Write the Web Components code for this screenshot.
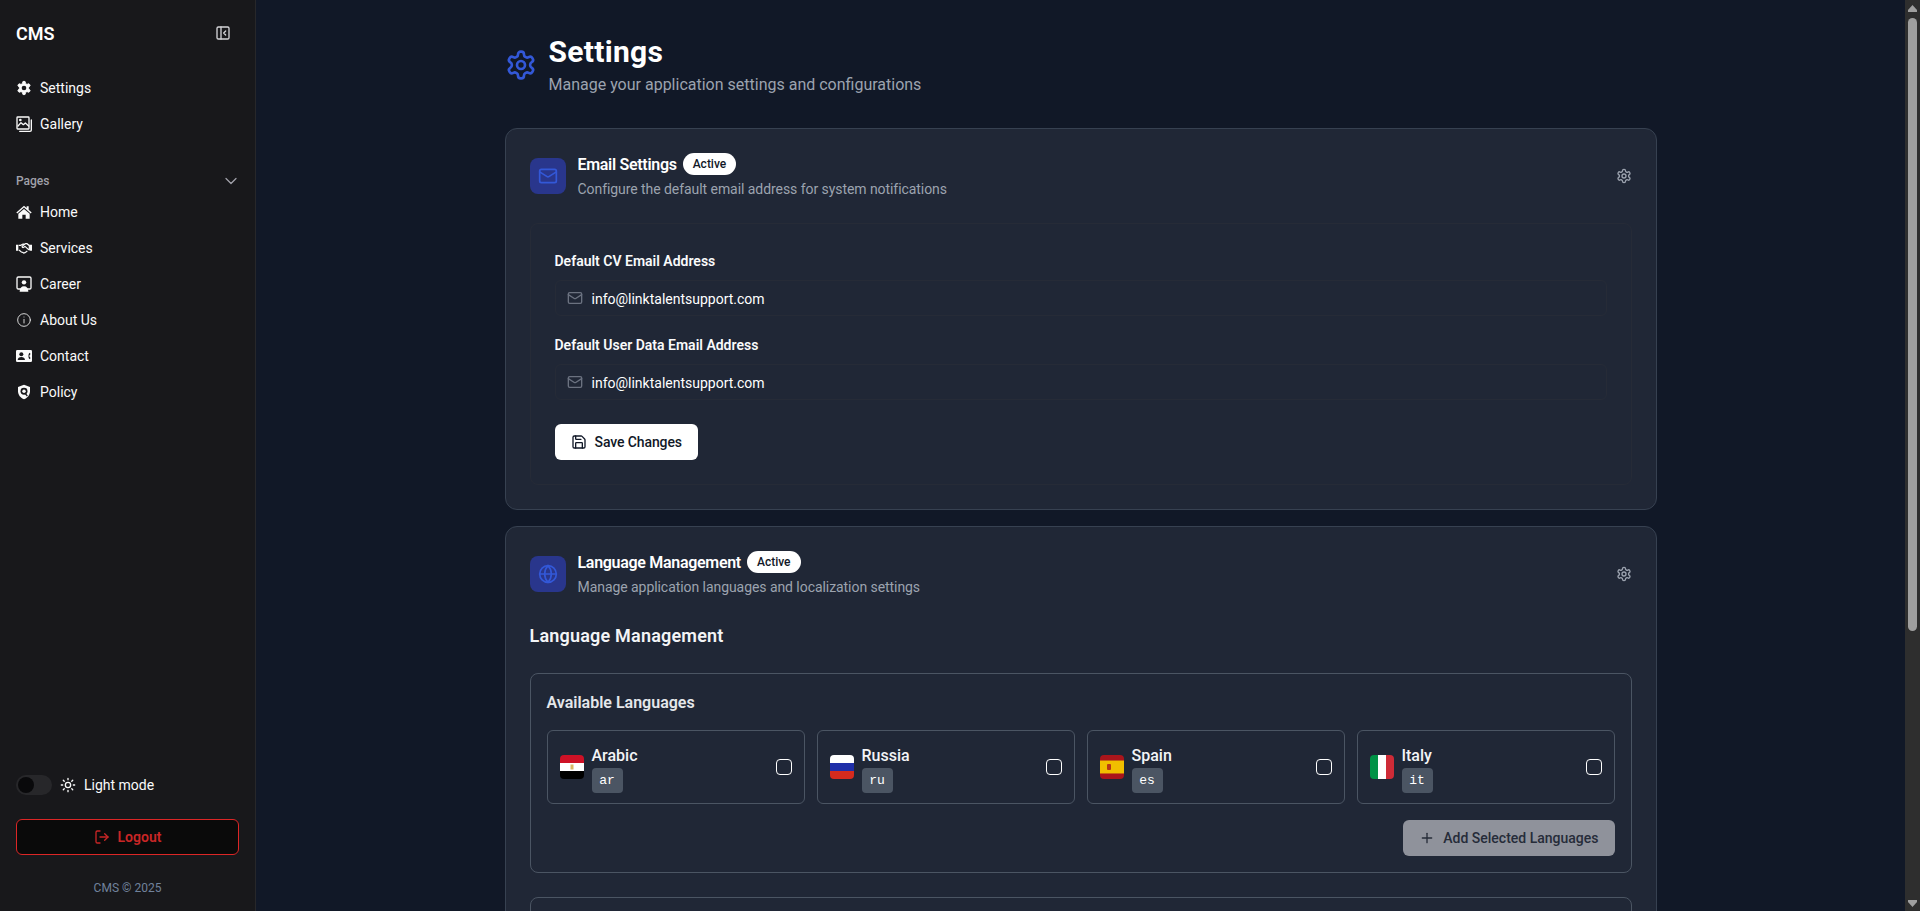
<!DOCTYPE html>
<html lang="en">
  <head>
    <meta charset="UTF-8" />
    <title>CMS Settings</title>
    <style>
      html, body {
        margin: 0;
        height: 100%;
        overflow: hidden;
      }
      body {
        display: flex;
        background: #111827;
        color: #fff;
        font-family: Roboto, "Noto Sans", sans-serif;
        font-size: 14px;
      }
    </style>
  </head>
  <body>
    <cms-sidebar>
      <nav-item icon="gearFill" label="Settings"></nav-item>
      <nav-item icon="images" label="Gallery"></nav-item>
      <nav-item slot="pages" icon="home" label="Home"></nav-item>
      <nav-item slot="pages" icon="handshake" label="Services"></nav-item>
      <nav-item slot="pages" icon="career" label="Career"></nav-item>
      <nav-item slot="pages" icon="info" label="About Us"></nav-item>
      <nav-item slot="pages" icon="contact" label="Contact"></nav-item>
      <nav-item slot="pages" icon="policy" label="Policy"></nav-item>
    </cms-sidebar>

    <settings-page>
      <settings-card
        icon="mail"
        heading="Email Settings"
        desc="Configure the default email address for system notifications"
      >
        <email-form></email-form>
      </settings-card>

      <settings-card
        icon="globe"
        heading="Language Management"
        desc="Manage application languages and localization settings"
      >
        <language-panel>
          <language-item name="Arabic" code="ar" flag="eg"></language-item>
          <language-item name="Russia" code="ru" flag="ru"></language-item>
          <language-item name="Spain" code="es" flag="es"></language-item>
          <language-item name="Italy" code="it" flag="it"></language-item>
        </language-panel>
      </settings-card>
    </settings-page>

    <fake-scrollbar></fake-scrollbar>

    <script>
      // stroke icons, drawn on a 24 grid
      const STROKES = {
        gear: '<path d="M12.22 2h-.44a2 2 0 0 0-2 2v.18a2 2 0 0 1-1 1.73l-.43.25a2 2 0 0 1-2 0l-.15-.08a2 2 0 0 0-2.73.73l-.22.38a2 2 0 0 0 .73 2.73l.15.1a2 2 0 0 1 1 1.72v.51a2 2 0 0 1-1 1.74l-.15.09a2 2 0 0 0-.73 2.73l.22.38a2 2 0 0 0 2.73.73l.15-.08a2 2 0 0 1 2 0l.43.25a2 2 0 0 1 1 1.73V20a2 2 0 0 0 2 2h.44a2 2 0 0 0 2-2v-.18a2 2 0 0 1 1-1.73l.43-.25a2 2 0 0 1 2 0l.15.08a2 2 0 0 0 2.73-.73l.22-.39a2 2 0 0 0-.73-2.73l-.15-.08a2 2 0 0 1-1-1.74v-.5a2 2 0 0 1 1-1.74l.15-.09a2 2 0 0 0 .73-2.73l-.22-.38a2 2 0 0 0-2.73-.73l-.15.08a2 2 0 0 1-2 0l-.43-.25a2 2 0 0 1-1-1.73V4a2 2 0 0 0-2-2z"/><circle cx="12" cy="12" r="3"/>',
        mail: '<rect x="2" y="4" width="20" height="16" rx="2"/><path d="m22 7-8.97 5.7a1.94 1.94 0 0 1-2.06 0L2 7"/>',
        globe: '<circle cx="12" cy="12" r="10"/><path d="M12 2a14.5 14.5 0 0 0 0 20 14.5 14.5 0 0 0 0-20"/><path d="M2 12h20"/>',
        save: '<path d="M15.2 3a2 2 0 0 1 1.4.6l3.8 3.8a2 2 0 0 1 .6 1.4V19a2 2 0 0 1-2 2H5a2 2 0 0 1-2-2V5a2 2 0 0 1 2-2z"/><path d="M17 21v-7a1 1 0 0 0-1-1H8a1 1 0 0 0-1 1v7"/><path d="M7 3v4a1 1 0 0 0 1 1h7"/>',
        plus: '<path d="M5 12h14"/><path d="M12 5v14"/>',
        logout: '<path d="M9 21H5a2 2 0 0 1-2-2V5a2 2 0 0 1 2-2h4"/><path d="m16 17 5-5-5-5"/><path d="M21 12H9"/>',
        sun: '<circle cx="12" cy="12" r="4"/><path d="M12 2v2M12 20v2M4.93 4.93l1.41 1.41M17.66 17.66l1.41 1.41M2 12h2M20 12h2M6.34 17.66l-1.41 1.41M19.07 4.93l-1.41 1.41"/>',
        chevron: '<path d="m6 9 6 6 6-6"/>',
        panel: '<rect x="3" y="3" width="18" height="18" rx="2"/><path d="M9 3v18"/><path d="m16 15-3-3 3-3"/>',
        info: '<circle cx="12" cy="12" r="9.500"/><path d="M12 16.500v-5.500"/><path d="M12 7.500h.01"/>',
        images: '<rect x="1.500" y="1.500" width="18" height="18" rx="1"/><path d="M23 6v15a2 2 0 0 1-2 2H5.500"/><path d="m3 15 4.500-5 3.500 3 3-2.500 5 4.500"/><circle cx="6.500" cy="6" r="1"/>',
      };

      // filled icons for the nav, the holes use the sidebar colour
      const FILLS = {
        gearFill: '<path d="M12.22 2h-.44a2 2 0 0 0-2 2v.18a2 2 0 0 1-1 1.73l-.43.25a2 2 0 0 1-2 0l-.15-.08a2 2 0 0 0-2.73.73l-.22.38a2 2 0 0 0 .73 2.73l.15.1a2 2 0 0 1 1 1.72v.51a2 2 0 0 1-1 1.74l-.15.09a2 2 0 0 0-.73 2.73l.22.38a2 2 0 0 0 2.73.73l.15-.08a2 2 0 0 1 2 0l.43.25a2 2 0 0 1 1 1.73V20a2 2 0 0 0 2 2h.44a2 2 0 0 0 2-2v-.18a2 2 0 0 1 1-1.73l.43-.25a2 2 0 0 1 2 0l.15.08a2 2 0 0 0 2.73-.73l.22-.39a2 2 0 0 0-.73-2.73l-.15-.08a2 2 0 0 1-1-1.74v-.5a2 2 0 0 1 1-1.74l.15-.09a2 2 0 0 0 .73-2.73l-.22-.38a2 2 0 0 0-2.73-.73l-.15.08a2 2 0 0 1-2 0l-.43-.25a2 2 0 0 1-1-1.73V4a2 2 0 0 0-2-2z" stroke="currentColor" stroke-width="1.500"/><circle cx="12" cy="12" r="3.500" fill="#18181b"/>',
        home: '<path d="M12 2.500.5 12.600l1.400 1.600L12 5.400l10.100 8.800 1.400-1.600-4.500-3.900V3.500h-3v2.600z"/><path d="M12 7.400 3.500 14.800V22h6v-6h5v6h6v-7.200z"/>',
        handshake: '<path d="M0 7h3.500v9H0zM20.500 7H24v9h-3.500z"/><path d="M4 8h3l3.500-2h3l-4 3.200c-1 1.200.6 2.800 2 1.800l2-1.400 5.500 5H20V8h-.5l-3-2.500h-2.800" fill="none" stroke="currentColor" stroke-width="1.800"/><path d="M4.500 15l3.500 3 2 .5 1.500 1 2-.5 3.500-2.500" fill="none" stroke="currentColor" stroke-width="1.800"/>',
        career: '<rect x="1.500" y="1.500" width="21" height="18" rx="2" fill="none" stroke="currentColor" stroke-width="2"/><circle cx="12" cy="9.500" r="3.300"/><path d="M5.500 23.500c0-5 2.500-8 6.500-8s6.500 3 6.500 8z"/>',
        contact: '<rect y="3" width="24" height="18" rx="2"/><circle cx="8" cy="9.500" r="3" fill="#18181b"/><path d="M2.500 18c0-3 2.500-4.500 5.500-4.500s5.500 1.500 5.500 4.500z" fill="#18181b"/><path d="M20 7c-1.800 2.800-1.800 7.200 0 10l1.800-1.800-1-2.200h-.8v-2h.8l1-2.200z" fill="#18181b"/>',
        policy: '<path d="M12 1 3 4.500V11c0 5.500 3.800 10 9 12 5.200-2 9-6.500 9-12V4.500z"/><circle cx="12" cy="11" r="5.200" fill="#18181b"/><circle cx="12" cy="11" r="2.600"/><path d="M14 14.500l3 3.500" stroke="#18181b" stroke-width="2"/>',
      };

      function iconSvg(name, size, width) {
        if (FILLS[name]) {
          return `<svg width="${size}" height="${size}" viewBox="0 0 24 24" fill="currentColor">${FILLS[name]}</svg>`;
        }
        return `<svg width="${size}" height="${size}" viewBox="0 0 24 24" fill="none" stroke="currentColor" stroke-width="${width || 2}" stroke-linecap="round" stroke-linejoin="round">${STROKES[name]}</svg>`;
      }

      const FLAGS = {
        eg: '<rect width="24" height="8" fill="#ce1126"/><rect y="8" width="24" height="8" fill="#fff"/><rect y="16" width="24" height="8" fill="#000"/><rect x="10.500" y="9.500" width="3" height="5" fill="#d8b765"/>',
        ru: '<rect width="24" height="8" fill="#fff"/><rect y="8" width="24" height="8" fill="#1f2fa8"/><rect y="16" width="24" height="8" fill="#d52b1e"/>',
        es: '<rect width="24" height="24" fill="#aa151b"/><rect y="6" width="24" height="12" fill="#f1bf00"/><rect y="5" width="24" height="1" fill="#c8650f"/><rect y="18" width="24" height="1" fill="#c8650f"/><rect x="7" y="9" width="4" height="6" rx="1" fill="#aa151b" opacity=".8"/>',
        it: '<rect width="8" height="24" fill="#009246"/><rect x="8" width="8" height="24" fill="#fff"/><rect x="16" width="8" height="24" fill="#ce2b37"/>',
      };

      class NavItem extends HTMLElement {
        connectedCallback() {
          const shadow = this.attachShadow({ mode: 'open' });
          const name = this.getAttribute('icon');
          shadow.innerHTML = `
            <style>
              :host { display: flex; align-items: center; gap: 8px; height: 36px; color: #fafafa; font-size: 14px; }
              svg { display: block; flex: none; }
            </style>
            ${iconSvg(name, 16, name === 'info' ? 1.25 : 2)}
            <span>${this.getAttribute('label')}</span>
          `;
        }
      }

      class CmsSidebar extends HTMLElement {
        constructor() {
          super();
          const shadow = this.attachShadow({ mode: 'open' });
          shadow.innerHTML = `
            <style>
              :host {
                display: flex;
                flex-direction: column;
                flex: none;
                box-sizing: border-box;
                width: 256px;
                height: 100%;
                background: #18181b;
                border-right: 1px solid #27272a;
              }
              svg { display: block; flex: none; }
              .top {
                display: flex;
                align-items: center;
                justify-content: space-between;
                height: 34px;
                padding: 16px 24px 0 16px;
              }
              .logo { font-size: 18px; font-weight: 600; color: #fff; }
              .panel { color: #d4d4d8; }
              nav { padding: 20px 16px 0; }
              .group {
                display: flex;
                align-items: center;
                justify-content: space-between;
                height: 20px;
                margin: 29px -2px 3px 16px;
                padding-right: 16px;
                font-size: 12px;
                font-weight: 500;
                color: #a1a1aa;
              }
              .group svg { color: #a1a1aa; }
              .spacer { flex: 1; }
              .mode {
                display: flex;
                align-items: center;
                gap: 8px;
                height: 20px;
                padding: 0 16px;
                color: #fafafa;
              }
              .track {
                display: flex;
                align-items: center;
                box-sizing: border-box;
                width: 36px;
                height: 20px;
                padding: 0 2px;
                border-radius: 10px;
                background: #27272a;
              }
              .thumb { width: 16px; height: 16px; border-radius: 50%; background: #09090b; }
              .logout {
                display: flex;
                align-items: center;
                justify-content: center;
                gap: 8px;
                box-sizing: border-box;
                height: 36px;
                margin: 24px 16px;
                border: 1px solid #dc2626;
                border-radius: 6px;
                background: #0a0a0a;
                color: #c92626;
                font-weight: 600;
              }
              .copy { height: 16px; margin-bottom: 15px; padding-top: 1px; text-align: center; font-size: 12px; line-height: 16px; color: #71829b; }
            </style>
            <div class="top">
              <span class="logo">CMS</span>
              <span class="panel">${iconSvg('panel', 16)}</span>
            </div>
            <nav><slot></slot></nav>
            <div class="group"><span>Pages</span>${iconSvg('chevron', 20, 1.5)}</div>
            <nav style="padding-top:0"><slot name="pages"></slot></nav>
            <div class="spacer"></div>
            <div class="mode">
              <div class="track"><div class="thumb"></div></div>
              ${iconSvg('sun', 16)}
              <span>Light mode</span>
            </div>
            <div class="logout">${iconSvg('logout', 16)}<span>Logout</span></div>
            <div class="copy">CMS © 2025</div>
          `;
        }
      }

      class SettingsPage extends HTMLElement {
        constructor() {
          super();
          const shadow = this.attachShadow({ mode: 'open' });
          shadow.innerHTML = `
            <style>
              :host { display: block; flex: 1; min-width: 0; height: 100%; overflow: hidden; }
              .wrap { width: 1152px; margin: 0 auto; padding-top: 32px; }
              header { display: flex; align-items: center; gap: 12px; margin-bottom: 31px; }
              header svg { display: block; color: #3358d8; }
              h1 { margin: 2px 0 3px; font-size: 30px; line-height: 36px; font-weight: 700; letter-spacing: .3px; color: #fff; }
              p { margin: 0; font-size: 16px; line-height: 24px; color: #9ca3af; }
              .cards { display: flex; flex-direction: column; gap: 16px; }
            </style>
            <div class="wrap">
              <header>
                ${iconSvg('gear', 32)}
                <div>
                  <h1>Settings</h1>
                  <p>Manage your application settings and configurations</p>
                </div>
              </header>
              <div class="cards"><slot></slot></div>
            </div>
          `;
        }
      }

      class SettingsCard extends HTMLElement {
        connectedCallback() {
          const shadow = this.attachShadow({ mode: 'open' });
          shadow.innerHTML = `
            <style>
              :host {
                display: block;
                box-sizing: border-box;
                padding: 24px;
                border: 1px solid #374151;
                border-radius: 12px;
                background: #202736;
              }
              svg { display: block; flex: none; }
              .head { display: flex; align-items: center; gap: 12px; height: 46px; margin-bottom: 24px; }
              .tile {
                display: flex;
                align-items: center;
                justify-content: center;
                width: 36px;
                height: 36px;
                border-radius: 8px;
                background: #29368c;
                color: #3358d8;
              }
              .text { flex: 1; }
              .title { display: flex; align-items: flex-start; gap: 6px; height: 24px; margin-bottom: 2px; font-size: 16px; line-height: 22px; font-weight: 600; color: #fff; }
              .name { padding-top: 1px; letter-spacing: -.3px; }
              .badge {
                padding: 0 10px;
                height: 22px;
                line-height: 22px;
                border-radius: 11px;
                background: #fff;
                color: #111827;
                font-size: 12px;
                font-weight: 500;
              }
              .desc { font-size: 14px; line-height: 20px; letter-spacing: -.06px; color: #9ca3af; }
              .cog { color: #9ca3af; }
            </style>
            <div class="head">
              <div class="tile">${iconSvg(this.getAttribute('icon'), 20)}</div>
              <div class="text">
                <div class="title"><span class="name">${this.getAttribute('heading')}</span><span class="badge">Active</span></div>
                <div class="desc">${this.getAttribute('desc')}</div>
              </div>
              <div class="cog">${iconSvg('gear', 16)}</div>
            </div>
            <slot></slot>
          `;
        }
      }

      class EmailForm extends HTMLElement {
        constructor() {
          super();
          const shadow = this.attachShadow({ mode: 'open' });
          const field = (label) => `
            <div class="label">${label}</div>
            <div class="input">${iconSvg('mail', 16)}<span>info@linktalentsupport.com</span></div>
          `;
          shadow.innerHTML = `
            <style>
              :host {
                display: block;
                box-sizing: border-box;
                height: 262px;
                padding: 27px 24px 24px;
                border: 1px solid #262b37;
                border-radius: 8px;
              }
              svg { display: block; flex: none; }
              .label { height: 20px; margin-bottom: 9px; font-size: 14px; line-height: 20px; font-weight: 600; color: #f9fafb; }
              .input {
                display: flex;
                align-items: center;
                gap: 9px;
                box-sizing: border-box;
                height: 36px;
                margin-bottom: 19px;
                padding-left: 11px;
                border: 1px solid #262b37;
                border-radius: 6px;
                color: #fff;
                font-size: 14px;
              }
              .input span { padding-top: 2px; }
              .input svg { color: #6b7280; }
              .save {
                display: inline-flex;
                align-items: center;
                gap: 8px;
                height: 36px;
                margin-top: 5px;
                padding: 0 16px;
                border-radius: 6px;
                background: #fff;
                color: #111827;
                font-size: 14px;
                font-weight: 500;
                letter-spacing: -.1px;
              }
            </style>
            ${field('Default CV Email Address')}
            ${field('Default User Data Email Address')}
            <div class="save">${iconSvg('save', 16)}<span>Save Changes</span></div>
          `;
        }
      }

      class LanguagePanel extends HTMLElement {
        constructor() {
          super();
          const shadow = this.attachShadow({ mode: 'open' });
          shadow.innerHTML = `
            <style>
              :host { display: block; }
              svg { display: block; flex: none; }
              h3 { margin: 25px 0 23px; font-size: 18px; line-height: 28px; font-weight: 600; letter-spacing: .2px; color: #f3f4f6; }
              .box { box-sizing: border-box; padding: 16px; border: 1px solid #4b5563; border-radius: 8px; }
              h4 { margin: 0 0 15px; padding-top: 1px; font-size: 16px; line-height: 24px; font-weight: 600; color: #e5e7eb; }
              .grid { display: grid; grid-template-columns: repeat(4, 1fr); gap: 12px; }
              .actions { display: flex; justify-content: flex-end; margin-top: 16px; }
              .add {
                display: flex;
                align-items: center;
                gap: 8px;
                height: 36px;
                padding: 0 16px;
                border-radius: 6px;
                background: #8f929b;
                color: #262c39;
                font-size: 14px;
                font-weight: 500;
              }
              .next { height: 300px; margin-top: 24px; }
            </style>
            <h3>Language Management</h3>
            <div class="box">
              <h4>Available Languages</h4>
              <div class="grid"><slot></slot></div>
              <div class="actions">
                <div class="add">${iconSvg('plus', 16)}<span>Add Selected Languages</span></div>
              </div>
            </div>
            <div class="box next"></div>
          `;
        }
      }

      class LanguageItem extends HTMLElement {
        connectedCallback() {
          const shadow = this.attachShadow({ mode: 'open' });
          shadow.innerHTML = `
            <style>
              :host {
                display: flex;
                align-items: center;
                gap: 8px;
                box-sizing: border-box;
                height: 74px;
                padding: 0 12px;
                border: 1px solid #4b5563;
                border-radius: 6px;
              }
              .flag { display: block; width: 24px; height: 24px; border-radius: 4px; flex: none; }
              .info { flex: 1; align-self: flex-start; margin-top: 13px; }
              .name { font-size: 16px; line-height: 24px; font-weight: 500; color: #f3f4f6; }
              code {
                display: block;
                box-sizing: border-box;
                width: 31px;
                height: 25px;
                border-radius: 4px;
                background: #4b5563;
                color: #fff;
                text-align: center;
                font-family: "Liberation Mono", monospace;
                font-size: 13px;
                line-height: 26px;
              }
              .check { width: 16px; height: 16px; box-sizing: border-box; border: 1px solid #fff; border-radius: 4px; flex: none; }
            </style>
            <svg class="flag" viewBox="0 0 24 24">${FLAGS[this.getAttribute('flag')]}</svg>
            <div class="info">
              <div class="name">${this.getAttribute('name')}</div>
              <code>${this.getAttribute('code')}</code>
            </div>
            <div class="check"></div>
          `;
        }
      }

      // the window scrollbar, kept as a column of its own
      class FakeScrollbar extends HTMLElement {
        constructor() {
          super();
          const shadow = this.attachShadow({ mode: 'open' });
          shadow.innerHTML = `
            <style>
              :host {
                display: flex;
                flex-direction: column;
                align-items: center;
                flex: none;
                width: 15px;
                height: 100%;
                background: #2e2e2e;
              }
              svg { display: block; flex: none; }
              .up { margin-top: 5px; }
              .thumb { width: 9px; height: 613px; margin-top: 6px; border-radius: 5px; background: #9f9f9f; }
              .gap { flex: 1; }
              .down { margin-bottom: 4px; }
            </style>
            <svg class="up" width="9" height="7" viewBox="0 0 9 7"><path d="M4.500 0 9 5v2H0V5z" fill="#9f9f9f"/></svg>
            <div class="thumb"></div>
            <div class="gap"></div>
            <svg class="down" width="9" height="7" viewBox="0 0 9 7"><path d="M4.500 7 9 2V0H0v2z" fill="#9f9f9f"/></svg>
          `;
        }
      }

      customElements.define('nav-item', NavItem);
      customElements.define('cms-sidebar', CmsSidebar);
      customElements.define('settings-page', SettingsPage);
      customElements.define('settings-card', SettingsCard);
      customElements.define('email-form', EmailForm);
      customElements.define('language-panel', LanguagePanel);
      customElements.define('language-item', LanguageItem);
      customElements.define('fake-scrollbar', FakeScrollbar);
    </script>
  </body>
</html>
